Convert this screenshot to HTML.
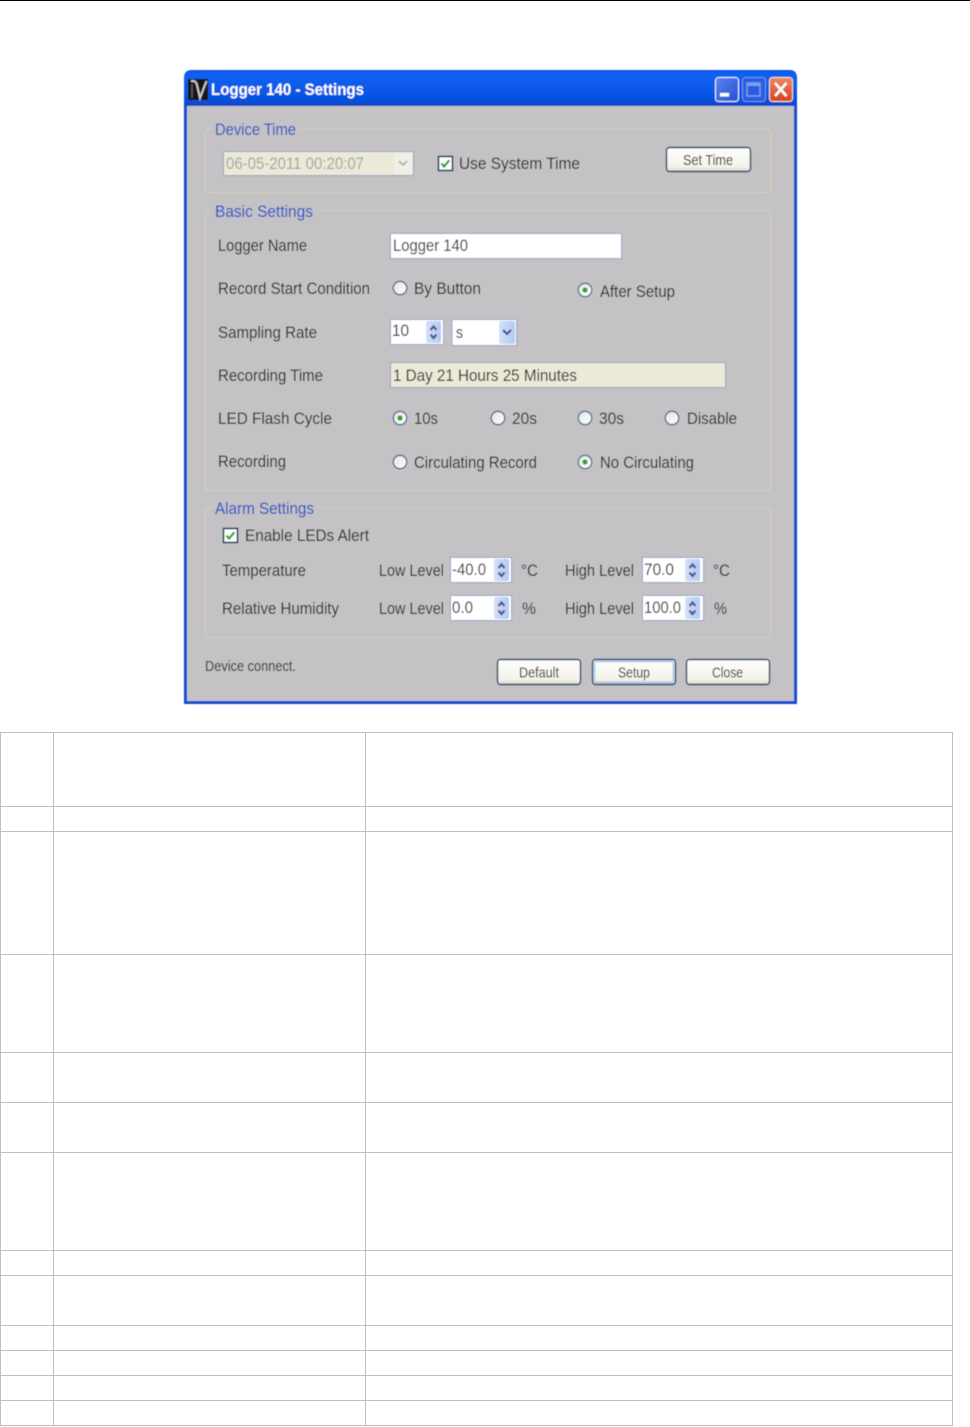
<!DOCTYPE html>
<html><head><meta charset="utf-8"><title>Logger 140 - Settings</title>
<style>
html,body{margin:0;padding:0;background:#fff}
svg{display:block}
text{font-family:"Liberation Sans",sans-serif;font-size:17px;fill:#1c1c1c}
.l{fill:#1a4cc4}
.s{font-size:15px;fill:#161616}
</style></head><body>
<svg width="970" height="1427" viewBox="0 0 970 1427" xmlns="http://www.w3.org/2000/svg">
<defs>
<linearGradient id="tb" x1="0" y1="0" x2="0" y2="1"><stop offset="0" stop-color="#0a56e4"/><stop offset=".12" stop-color="#0a62f2"/><stop offset=".8" stop-color="#0653e0"/><stop offset="1" stop-color="#0a46c4"/></linearGradient>
<linearGradient id="btn" x1="0" y1="0" x2="0" y2="1"><stop offset="0" stop-color="#ffffff"/><stop offset=".8" stop-color="#f3f2ea"/><stop offset="1" stop-color="#dcd8ca"/></linearGradient>
<linearGradient id="spin" x1="0" y1="0" x2="1" y2="0"><stop offset="0" stop-color="#d5e0f8"/><stop offset="1" stop-color="#b4c8f2"/></linearGradient>
<linearGradient id="rb" x1="0" y1="0" x2="1" y2="1"><stop offset="0" stop-color="#e4e4dc"/><stop offset="1" stop-color="#ffffff"/></linearGradient>
<linearGradient id="cl" x1="0" y1="0" x2="0" y2="1"><stop offset="0" stop-color="#ea8a60"/><stop offset="1" stop-color="#d8401c"/></linearGradient>
<linearGradient id="mn" x1="0" y1="0" x2="1" y2="1"><stop offset="0" stop-color="#5a86ec"/><stop offset="1" stop-color="#2450d0"/></linearGradient>
<filter id="b" x="-2%" y="-2%" width="104%" height="104%"><feGaussianBlur stdDeviation="0.42"/></filter>
<g id="r"><circle r="6.7" fill="url(#rb)" stroke="#3d6a92" stroke-width="1.3"/></g>
<g id="rc"><circle r="6.7" fill="url(#rb)" stroke="#3d6a92" stroke-width="1.3"/><circle r="2.6" fill="#2aa03c"/></g>
<g id="cb"><rect x=".5" y=".5" width="14" height="14" fill="#fff" stroke="#163f5c" stroke-width="1.600"/><path d="M3.5 7.5l2.6 3 5.2-6.2" fill="none" stroke="#22a534" stroke-width="2.300"/></g>
<g id="sp"><rect width="15" height="22" rx="2" fill="url(#spin)"/><path d="M4.500 9l3-3.500 3 3.500M4.500 13.500l3 3.500 3-3.500" fill="none" stroke="#3c5a90" stroke-width="2.200"/></g>
</defs>

<rect x="0" y="0" width="970" height="1" fill="#000"/>

<g filter="url(#b)">
<path d="M184 78q0-8 8-8h597q8 0 8 8v626H184z" fill="#0a4ad4"/>
<path d="M184 78q0-8 8-8h597q8 0 8 8v28H184z" fill="url(#tb)"/>
<rect x="187" y="106" width="607" height="595" fill="#c4c2c5"/>

<rect x="188" y="79" width="20" height="21" fill="#141414"/>
<path d="M191 81h2q3 0 4 4l3 13 6.500-17" fill="none" stroke="#c8c8c8" stroke-width="2"/>
<path d="M192 84v14" fill="none" stroke="#5a5a5a" stroke-width="1.500"/>
<text x="211" y="95" textLength="153" lengthAdjust="spacingAndGlyphs" style="fill:#fff;font-weight:bold">Logger 140 - Settings</text>

<rect x="715.500" y="77.500" width="23" height="24" rx="3" fill="url(#mn)" stroke="#e8eefc"/>
<rect x="720" y="93" width="9" height="3.500" fill="#fff"/>
<rect x="742.500" y="77.500" width="23" height="24" rx="3" fill="#2c5ce0" stroke="#6f94ee"/>
<rect x="747" y="83" width="13" height="13" fill="none" stroke="#7c9cf0" stroke-width="1.500"/>
<rect x="747" y="83" width="13" height="3" fill="#7c9cf0"/>
<rect x="769.500" y="77.500" width="23" height="24" rx="3" fill="url(#cl)" stroke="#f0e0d8"/>
<path d="M775 83l11.500 13M786.500 83L775 96" stroke="#fff" stroke-width="2.600"/>

<g fill="none" stroke="#d2d0bc" stroke-width="1.200">
<rect x="205" y="128.500" width="566" height="64" rx="5"/>
<rect x="205" y="210.500" width="566" height="280" rx="5"/>
<rect x="205" y="507.500" width="566" height="130" rx="5"/>
</g>
<rect x="212" y="122" width="88" height="12" fill="#c4c2c5"/>
<rect x="212" y="204" width="106" height="12" fill="#c4c2c5"/>
<rect x="212" y="501" width="107" height="12" fill="#c4c2c5"/>
<text class="l" x="215" y="135" textLength="81" lengthAdjust="spacingAndGlyphs">Device Time</text>
<text class="l" x="215" y="217" textLength="98" lengthAdjust="spacingAndGlyphs">Basic Settings</text>
<text class="l" x="215" y="514" textLength="99" lengthAdjust="spacingAndGlyphs">Alarm Settings</text>

<!-- Device Time -->
<rect x="223.500" y="151.500" width="190" height="24" fill="#ece9d8" stroke="#8fa6c4"/>
<rect x="394" y="153" width="18" height="21" fill="#f0efe8"/>
<path d="M399 161l4 4 4-4" fill="none" stroke="#b0b0a8" stroke-width="1.800"/>
<text x="226" y="169" textLength="138" lengthAdjust="spacingAndGlyphs" style="fill:#a4a4a0">06-05-2011 00:20:07</text>
<use href="#cb" x="438" y="156"/>
<text x="459" y="169" textLength="121" lengthAdjust="spacingAndGlyphs">Use System Time</text>
<rect x="666.500" y="147.500" width="84" height="24" rx="3" fill="url(#btn)" stroke="#163f5c" stroke-width="1.400"/>
<text class="s" x="683" y="165" textLength="50" lengthAdjust="spacingAndGlyphs">Set Time</text>

<!-- Basic -->
<text x="218" y="251" textLength="89" lengthAdjust="spacingAndGlyphs">Logger Name</text>
<rect x="390.500" y="233.500" width="231" height="25" fill="#fff" stroke="#8fa6c4"/>
<text x="393" y="251" textLength="75" lengthAdjust="spacingAndGlyphs">Logger 140</text>

<text x="218" y="294" textLength="152" lengthAdjust="spacingAndGlyphs">Record Start Condition</text>
<use href="#r" x="400" y="288"/>
<text x="414" y="294" textLength="67" lengthAdjust="spacingAndGlyphs">By Button</text>
<use href="#rc" x="585" y="290"/>
<text x="600" y="297" textLength="75" lengthAdjust="spacingAndGlyphs">After Setup</text>

<text x="218" y="338" textLength="99" lengthAdjust="spacingAndGlyphs">Sampling Rate</text>
<rect x="390.500" y="319.500" width="53" height="25" fill="#fff" stroke="#8fa6c4"/>
<text x="392" y="336" textLength="17" lengthAdjust="spacingAndGlyphs">10</text>
<use href="#sp" x="426" y="321"/>
<rect x="452" y="319.500" width="64.500" height="26" fill="#fff" stroke="#8fa6c4"/>
<text x="456" y="338" textLength="7" lengthAdjust="spacingAndGlyphs">s</text>
<rect x="499" y="321" width="16" height="23" rx="2" fill="url(#spin)"/>
<path d="M503 330l4 4 4-4" fill="none" stroke="#2c4c8c" stroke-width="2"/>

<text x="218" y="381" textLength="105" lengthAdjust="spacingAndGlyphs">Recording Time</text>
<rect x="390.500" y="362.500" width="335" height="25" fill="#ece9d8" stroke="#8fa6c4"/>
<text x="393" y="381" textLength="184" lengthAdjust="spacingAndGlyphs">1 Day 21 Hours 25 Minutes</text>

<text x="218" y="424" textLength="114" lengthAdjust="spacingAndGlyphs">LED Flash Cycle</text>
<use href="#rc" x="400" y="418"/>
<text x="414" y="424" textLength="24" lengthAdjust="spacingAndGlyphs">10s</text>
<use href="#r" x="498" y="418"/>
<text x="512" y="424" textLength="25" lengthAdjust="spacingAndGlyphs">20s</text>
<use href="#r" x="585" y="418"/>
<text x="599" y="424" textLength="25" lengthAdjust="spacingAndGlyphs">30s</text>
<use href="#r" x="672" y="418"/>
<text x="687" y="424" textLength="50" lengthAdjust="spacingAndGlyphs">Disable</text>

<text x="218" y="467" textLength="68" lengthAdjust="spacingAndGlyphs">Recording</text>
<use href="#r" x="400" y="462"/>
<text x="414" y="468" textLength="123" lengthAdjust="spacingAndGlyphs">Circulating Record</text>
<use href="#rc" x="585" y="462"/>
<text x="600" y="468" textLength="94" lengthAdjust="spacingAndGlyphs">No Circulating</text>

<!-- Alarm -->
<use href="#cb" x="223" y="528"/>
<text x="245" y="541" textLength="124" lengthAdjust="spacingAndGlyphs">Enable LEDs Alert</text>

<text x="222" y="576" textLength="84" lengthAdjust="spacingAndGlyphs">Temperature</text>
<text x="379" y="576" textLength="65" lengthAdjust="spacingAndGlyphs">Low Level</text>
<rect x="450.500" y="557.500" width="61" height="25" fill="#fff" stroke="#8fa6c4"/>
<text x="452" y="575" textLength="34" lengthAdjust="spacingAndGlyphs">-40.0</text>
<use href="#sp" x="494" y="559"/>
<text x="521" y="576" textLength="17" lengthAdjust="spacingAndGlyphs">°C</text>
<text x="565" y="576" textLength="69" lengthAdjust="spacingAndGlyphs">High Level</text>
<rect x="642.500" y="557.500" width="61" height="25" fill="#fff" stroke="#8fa6c4"/>
<text x="644" y="575" textLength="30" lengthAdjust="spacingAndGlyphs">70.0</text>
<use href="#sp" x="685" y="559"/>
<text x="713" y="576" textLength="17" lengthAdjust="spacingAndGlyphs">°C</text>

<text x="222" y="614" textLength="117" lengthAdjust="spacingAndGlyphs">Relative Humidity</text>
<text x="379" y="614" textLength="65" lengthAdjust="spacingAndGlyphs">Low Level</text>
<rect x="450.500" y="595.500" width="61" height="25" fill="#fff" stroke="#8fa6c4"/>
<text x="452" y="613" textLength="21" lengthAdjust="spacingAndGlyphs">0.0</text>
<use href="#sp" x="494" y="597"/>
<text x="522" y="614" textLength="14" lengthAdjust="spacingAndGlyphs">%</text>
<text x="565" y="614" textLength="69" lengthAdjust="spacingAndGlyphs">High Level</text>
<rect x="642.500" y="595.500" width="61" height="25" fill="#fff" stroke="#8fa6c4"/>
<text x="644" y="613" textLength="37" lengthAdjust="spacingAndGlyphs">100.0</text>
<use href="#sp" x="685" y="597"/>
<text x="714" y="614" textLength="13" lengthAdjust="spacingAndGlyphs">%</text>

<!-- Footer -->
<text class="s" x="205" y="671" textLength="91" lengthAdjust="spacingAndGlyphs">Device connect.</text>
<rect x="497.500" y="659.500" width="83" height="25" rx="3" fill="url(#btn)" stroke="#163f5c" stroke-width="1.400"/>
<text class="s" x="519" y="677.500" textLength="40" lengthAdjust="spacingAndGlyphs">Default</text>
<rect x="592.500" y="659.500" width="83" height="25" rx="3" fill="url(#btn)" stroke="#163f5c" stroke-width="1.400"/>
<rect x="594.500" y="661.500" width="79" height="21" rx="2" fill="none" stroke="#a8c4ec" stroke-width="1.500"/>
<text class="s" x="618" y="677.500" textLength="32" lengthAdjust="spacingAndGlyphs">Setup</text>
<rect x="686.500" y="659.500" width="83" height="25" rx="3" fill="url(#btn)" stroke="#163f5c" stroke-width="1.400"/>
<text class="s" x="712" y="677.500" textLength="31" lengthAdjust="spacingAndGlyphs">Close</text>
</g>

<!-- Empty table -->
<g fill="none" stroke="#bfbfbf" stroke-width="1">
<path d="M.5 732.500V1426M53.500 732.500V1426M365.500 732.500V1426M952.500 732.500V1426"/>
<path d="M0 732.500H953M0 806.500H953M0 831.500H953M0 954.500H953M0 1052.500H953M0 1102.500H953M0 1152.500H953M0 1250.500H953M0 1275.500H953M0 1325.500H953M0 1350.500H953M0 1375.500H953M0 1400.500H953M0 1425.500H953"/>
</g>
</svg>
</body></html>
